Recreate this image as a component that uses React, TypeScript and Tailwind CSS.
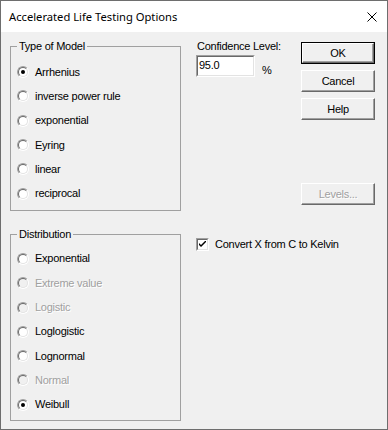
import React from "react";

const ui = "font-['Liberation_Sans',Arial,sans-serif] text-[11px] tracking-[-0.25px] leading-[13px]";

type Opt = { label: string; disabled?: boolean; checked?: boolean };

const models: Opt[] = [
  { label: "Arrhenius", checked: true },
  { label: "inverse power rule" },
  { label: "exponential" },
  { label: "Eyring" },
  { label: "linear" },
  { label: "reciprocal" },
];

const distributions: Opt[] = [
  { label: "Exponential" },
  { label: "Extreme value", disabled: true },
  { label: "Logistic", disabled: true },
  { label: "Loglogistic" },
  { label: "Lognormal" },
  { label: "Normal", disabled: true },
  { label: "Weibull", checked: true },
];

function Radio({ label, disabled, checked }: Opt) {
  return (
    <div className="flex h-[24.3px] items-center">
      <div className="ml-[6px] flex h-3 w-3 shrink-0 rounded-full border border-t-[#a0a0a0] border-l-[#a0a0a0] border-b-white border-r-white">
        <div
          className={`flex flex-1 items-center justify-center rounded-full border border-t-[#696969] border-l-[#696969] border-b-[#e3e3e3] border-r-[#e3e3e3] ${
            disabled ? "bg-[#f0f0f0]" : "bg-white"
          }`}
        >
          {checked && <div className="h-[4px] w-[4px] rounded-full bg-black" />}
        </div>
      </div>
      <span
        className={`ml-[6px] ${
          disabled ? "text-[#a0a0a0] [text-shadow:1px_1px_0_#fff]" : "text-black"
        }`}
      >
        {label}
      </span>
    </div>
  );
}

function Group({ title, items, className }: { title: string; items: Opt[]; className?: string }) {
  return (
    <fieldset className={`w-[171px] border border-[#a0a0a0] ${className ?? ""}`}>
      <legend className="ml-[6px] px-[2px] text-black">{title}</legend>
      {items.map((o) => (
        <Radio key={o.label} {...o} />
      ))}
    </fieldset>
  );
}

function Button({ children, primary, disabled, className }: { children: React.ReactNode; primary?: boolean; disabled?: boolean; className?: string }) {
  const frame = primary ? "border border-black" : "";
  return (
    <div className={`h-[22px] w-[74px] bg-[#f0f0f0] ${frame} ${className ?? ""}`}>
      <div className="flex h-full w-full items-center justify-center border border-t-white border-l-white border-b-[#696969] border-r-[#696969] shadow-[inset_-1px_-1px_0_#a0a0a0]">
        <span className={disabled ? "text-[#a0a0a0] [text-shadow:1px_1px_0_#fff]" : "text-black"}>{children}</span>
      </div>
    </div>
  );
}

export default function App() {
  return (
    <div className={`h-[430px] w-[388px] overflow-hidden border border-[#6e6e6e] bg-[#f0f0f0] ${ui}`}>
      <div className="flex h-[31px] items-center justify-between bg-white pl-[8px] pr-[9px]">
        <span className="font-['Noto_Sans',sans-serif] text-[11.2px] tracking-normal text-black">
          Accelerated Life Testing Options
        </span>
        <svg width="10" height="10" viewBox="0 0 10 10" className="mr-[1px]">
          <path d="M0.5 0.5 L9.5 9.5 M9.5 0.5 L0.5 9.5" stroke="#000" strokeWidth="1" />
        </svg>
      </div>

      <div className="flex pl-[9px] pt-[8px]">
        <div className="flex flex-col">
          <Group title="Type of Model" items={models} className="pb-[4px] pt-[7px]" />
          <Group title="Distribution" items={distributions} className="mt-[17px] pb-[3px] pt-[6px]" />
        </div>

        <div className="ml-[15px] flex w-[179px] flex-col">
          <div className="flex justify-between">
            <div className="flex flex-col">
              <span className="pl-[1px] text-black">Confidence Level:</span>
              <div className="mt-[2px] flex items-end">
                <div className="h-[22px] w-[59px] border border-t-[#a0a0a0] border-l-[#a0a0a0] border-b-white border-r-white">
                  <div className="h-full border border-t-[#696969] border-l-[#696969] border-b-[#e3e3e3] border-r-[#e3e3e3] bg-white pl-[1px] pt-[2px] text-black">
                    95.0
                  </div>
                </div>
                <span className="ml-[7px] text-black">%</span>
              </div>
            </div>
            <div className="mt-[2px] flex flex-col gap-[6px]">
              <Button primary>OK</Button>
              <Button>Cancel</Button>
              <Button>Help</Button>
            </div>
          </div>

          <Button disabled className="ml-auto mt-[63px] h-[21px]">Levels...</Button>

          <div className="mt-[33px] flex items-center">
            <div className="h-[13px] w-[13px] border border-t-[#a0a0a0] border-l-[#a0a0a0] border-b-white border-r-white">
              <div className="flex h-full items-center justify-center border border-t-[#696969] border-l-[#696969] border-b-[#e3e3e3] border-r-[#e3e3e3] bg-white">
                <svg width="7" height="7" viewBox="0 0 7 7">
                  <path d="M0 2 L0 4 L2 6 L7 1 L7 -1 L2 4 Z" fill="#000" />
                </svg>
              </div>
            </div>
            <span className="ml-[6px] text-black">Convert X from C to Kelvin</span>
          </div>
        </div>
      </div>
    </div>
  );
}
